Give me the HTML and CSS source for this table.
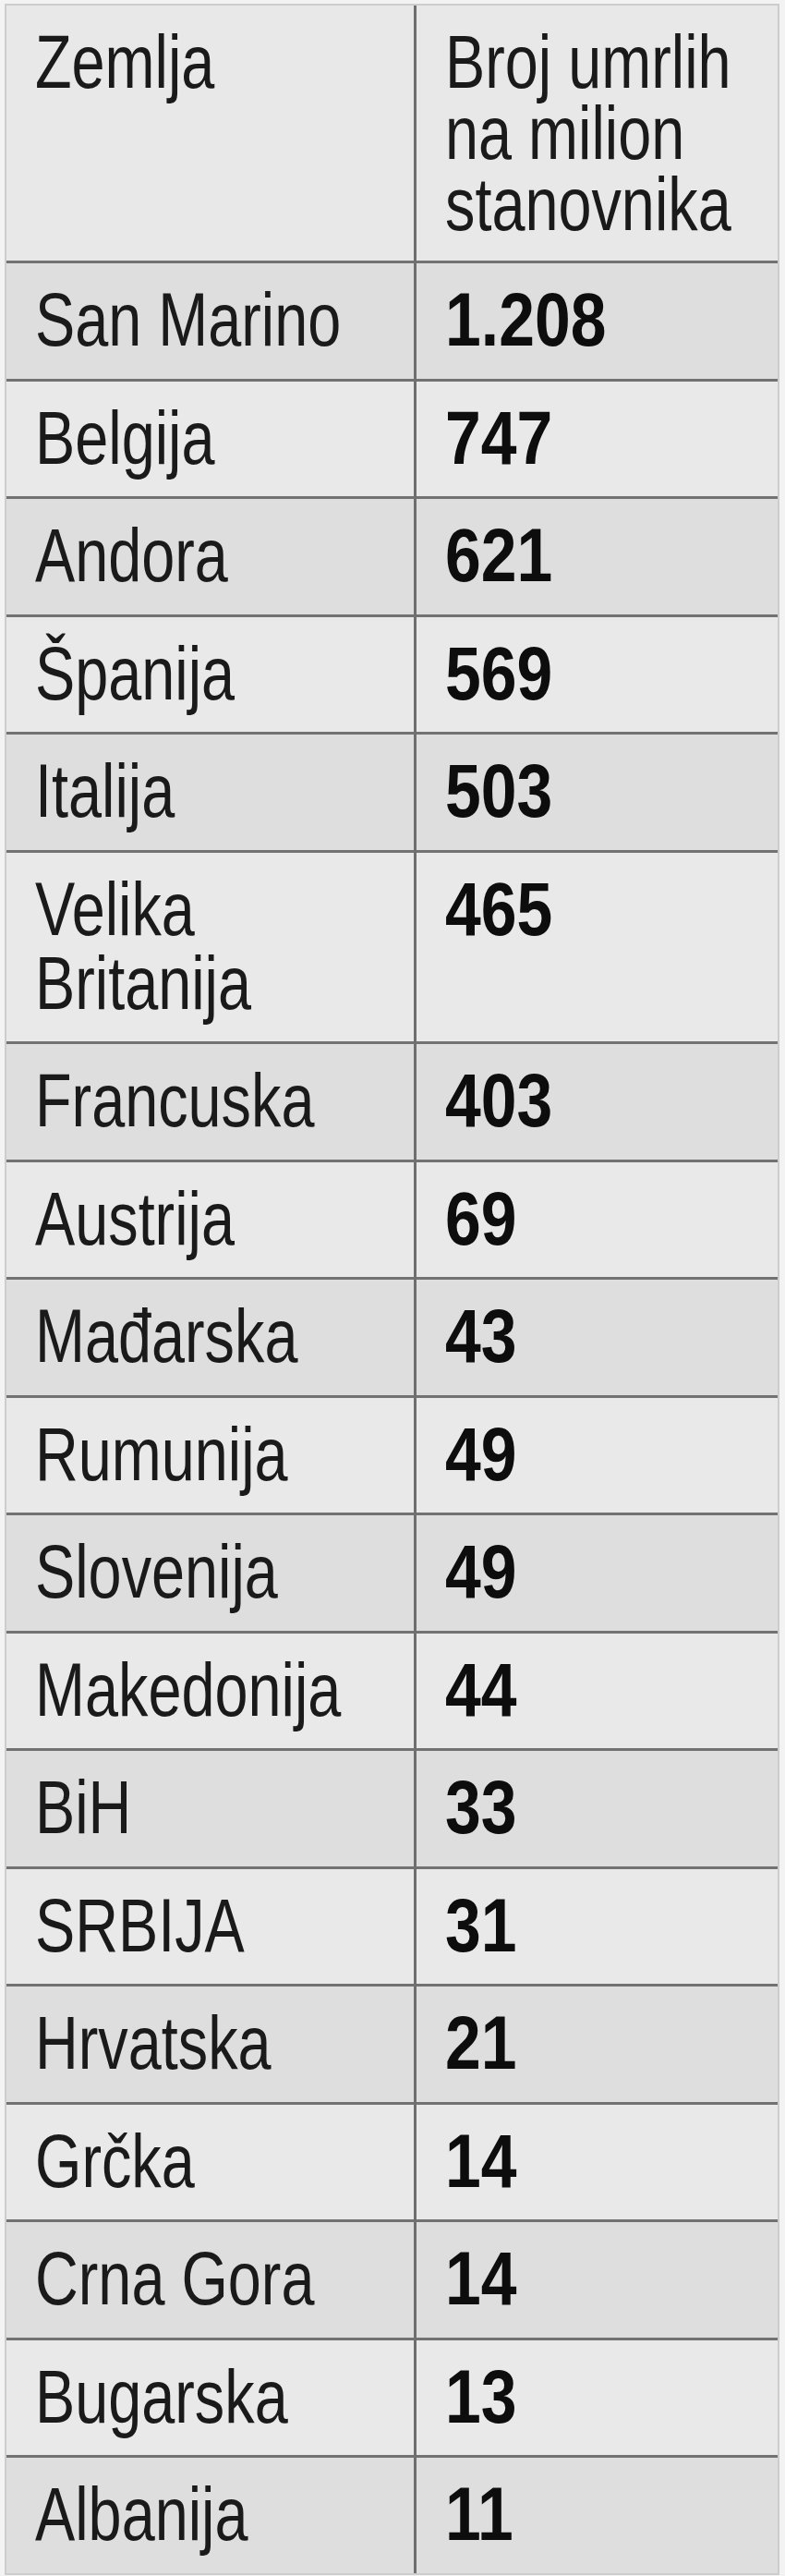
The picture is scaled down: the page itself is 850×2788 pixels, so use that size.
FILE: index.html
```html
<!DOCTYPE html>
<html lang="sr">
<head>
<meta charset="utf-8">
<title>Broj umrlih na milion stanovnika</title>
<link rel="stylesheet" href="styles.css">
</head>
<body>
<div class="table">
  <div class="cell head name"><span class="t">Zemlja</span></div>
  <div class="cell head val"><span class="t">Broj umrlih<br>na milion<br>stanovnika</span></div>

  <div class="cell name dark"><span class="t">San Marino</span></div><div class="cell val dark"><span class="t">1.208</span></div>
  <div class="cell name"><span class="t">Belgija</span></div><div class="cell val"><span class="t">747</span></div>
  <div class="cell name dark"><span class="t">Andora</span></div><div class="cell val dark"><span class="t">621</span></div>
  <div class="cell name"><span class="t">Španija</span></div><div class="cell val"><span class="t">569</span></div>
  <div class="cell name dark"><span class="t">Italija</span></div><div class="cell val dark"><span class="t">503</span></div>
  <div class="cell name"><span class="t">Velika<br>Britanija</span></div><div class="cell val"><span class="t">465</span></div>
  <div class="cell name dark"><span class="t">Francuska</span></div><div class="cell val dark"><span class="t">403</span></div>
  <div class="cell name"><span class="t">Austrija</span></div><div class="cell val"><span class="t">69</span></div>
  <div class="cell name dark"><span class="t">Mađarska</span></div><div class="cell val dark"><span class="t">43</span></div>
  <div class="cell name"><span class="t">Rumunija</span></div><div class="cell val"><span class="t">49</span></div>
  <div class="cell name dark"><span class="t">Slovenija</span></div><div class="cell val dark"><span class="t">49</span></div>
  <div class="cell name"><span class="t">Makedonija</span></div><div class="cell val"><span class="t">44</span></div>
  <div class="cell name dark"><span class="t">BiH</span></div><div class="cell val dark"><span class="t">33</span></div>
  <div class="cell name"><span class="t">SRBIJA</span></div><div class="cell val"><span class="t">31</span></div>
  <div class="cell name dark"><span class="t">Hrvatska</span></div><div class="cell val dark"><span class="t">21</span></div>
  <div class="cell name"><span class="t">Grčka</span></div><div class="cell val"><span class="t">14</span></div>
  <div class="cell name dark"><span class="t">Crna Gora</span></div><div class="cell val dark"><span class="t">14</span></div>
  <div class="cell name"><span class="t">Bugarska</span></div><div class="cell val"><span class="t">13</span></div>
  <div class="cell name dark last"><span class="t">Albanija</span></div><div class="cell val dark last"><span class="t">11</span></div>
</div>
</body>
</html>
```
FILE: styles.css
```css
html, body {
  margin: 0;
  padding: 0;
  background: #f3f3f3;
}

body {
  font-family: "Liberation Sans", Arial, sans-serif;
  color: #1a1a1a;
}

.table {
  margin: 4px 6px 0 5px;
  border: 2px solid #cdcdcd;
  display: grid;
  grid-template-columns: 444px minmax(0, 1fr);
  background: #e9e9e9;
  overflow: hidden;
}

.cell {
  font-size: 82px;
  line-height: 80px;
  padding: 21px 0 23.5px 31px;
  border-bottom: 3px solid #727272;
  background: #e9e9e9;
  min-width: 0;
}

.t {
  display: inline-block;
  white-space: nowrap;
  transform: scaleX(0.79);
  transform-origin: 0 0;
}

.cell.name {
  border-right: 3px solid #6e6e6e;
}

.cell.val {
  font-weight: bold;
  color: #0d0d0d;
  padding-left: 31px;
}

.cell.val .t {
  transform: scaleX(0.85);
}

.cell.head {
  line-height: 77px;
  padding-top: 22px;
  padding-bottom: 23px;
  background: #e8e8e8;
  font-weight: normal;
  color: #1a1a1a;
}

.cell.head.val .t {
  transform: scaleX(0.79);
}

.cell.dark {
  background: #dedede;
}

.cell.last {
  border-bottom: none;
}
```
